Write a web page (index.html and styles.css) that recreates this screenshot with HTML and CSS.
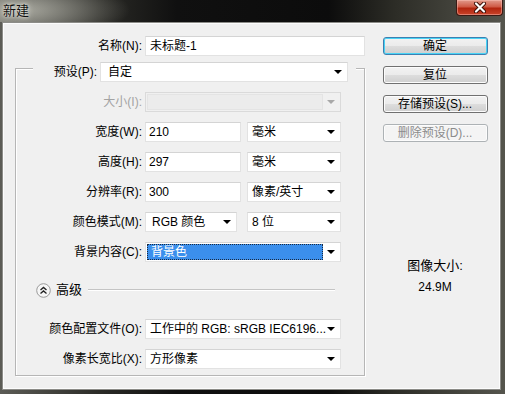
FILE: index.html
```html
<!doctype html>
<html lang="zh-CN">

<head>
  <meta charset="utf-8">
  <title>新建</title>
  <link rel="stylesheet" href="styles.css">
</head>

<body>
  <div class="window">
    <div class="titlebar">
      <span class="title">新建</span>
      <span class="close">
        <svg width="14" height="11" viewBox="0 0 14 11">
          <path d="M3 1.5 L11 9.5 M11 1.5 L3 9.5" stroke="#3a0c06" stroke-width="4" stroke-linecap="round" />
          <path d="M3 1.5 L11 9.5 M11 1.5 L3 9.5" stroke="#fff" stroke-width="2.2" stroke-linecap="round" />
        </svg>
      </span>
    </div>

    <div class="dialog">
      <div class="main">
        <div class="row name-row">
          <label>名称(<u>N</u>):</label>
          <div class="field name-field">未标题-1</div>
        </div>

        <div class="group">
          <div class="row preset-row">
            <label>预设(<u>P</u>):</label>
            <div class="field select preset-field">自定<i class="arrow"></i></div>
          </div>
          <div class="row">
            <label class="disabled">大小(<u>I</u>):</label>
            <div class="field select wide off"><span class="off-inner"></span><i class="arrow"></i></div>
          </div>
          <div class="row">
            <label>宽度(<u>W</u>):</label>
            <div class="field num">210</div>
            <div class="field select unit">毫米<i class="arrow"></i></div>
          </div>
          <div class="row">
            <label>高度(<u>H</u>):</label>
            <div class="field num">297</div>
            <div class="field select unit">毫米<i class="arrow"></i></div>
          </div>
          <div class="row">
            <label>分辨率(<u>R</u>):</label>
            <div class="field num">300</div>
            <div class="field select unit">像素/英寸<i class="arrow"></i></div>
          </div>
          <div class="row">
            <label>颜色模式(<u>M</u>):</label>
            <div class="field select mode">RGB 颜色<i class="arrow"></i></div>
            <div class="field select unit">8 位<i class="arrow"></i></div>
          </div>
          <div class="row">
            <label>背景内容(<u>C</u>):</label>
            <div class="field select wide focus"><span class="picked">背景色</span><i class="arrow"></i></div>
          </div>

          <div class="advanced">
            <span class="toggle">
              <svg width="15" height="15" viewBox="0 0 15 15">
                <circle cx="7.5" cy="7.5" r="6.8" fill="#f6f6f6" stroke="#9a9a9a" />
                <path d="M4.5 7 L7.5 4.5 L10.5 7 M4.5 10.5 L7.5 8 L10.5 10.5" fill="none" stroke="#222" stroke-width="1.4" />
              </svg>
            </span>
            <span class="adv-text">高级</span>
            <span class="adv-line"></span>
          </div>

          <div class="row profile-row">
            <label>颜色配置文件(<u>O</u>):</label>
            <div class="field select wide">工作中的 RGB: sRGB IEC6196...<i class="arrow"></i></div>
          </div>
          <div class="row">
            <label>像素长宽比(<u>X</u>):</label>
            <div class="field select wide">方形像素<i class="arrow"></i></div>
          </div>
        </div>
      </div>

      <div class="side">
        <button class="btn default">确定</button>
        <button class="btn">复位</button>
        <button class="btn">存储预设(<u>S</u>)...</button>
        <button class="btn" disabled>删除预设(<u>D</u>)...</button>
        <div class="size-info">
          <p class="size-label">图像大小:</p>
          <p class="size-value">24.9M</p>
        </div>
      </div>
    </div>
  </div>
</body>

</html>
```

FILE: styles.css
```css
* {
  box-sizing: border-box;
}

html,
body {
  margin: 0;
  padding: 0;
  background: #1c1c1a;
}

body,
button {
  font-family: "Liberation Sans", "Noto Sans CJK SC", sans-serif;
  font-size: 12px;
  color: #000;
}

u {
  text-decoration: none;
}

.window {
  width: 505px;
  height: 394px;
  display: flex;
  flex-direction: column;
  background: linear-gradient(90deg, #5c5c56 0, #2a2a26 20%, #101010 35%, #0c0c0c 65%, #2c2c26 78%, #55554d 100%);
}

.titlebar {
  height: 22px;
  display: flex;
  align-items: flex-start;
  justify-content: space-between;
  background: radial-gradient(ellipse 110px 30px at 20px 10px, rgba(190, 190, 180, 0.8), rgba(190, 190, 180, 0) 100%);
}

.title {
  margin: 3px 0 0 3px;
  line-height: 16px;
  font-size: 13px;
  color: #111;
  text-shadow: 0 0 6px #e8e8e0, 0 0 3px #e8e8e0;
}

.close {
  width: 47px;
  height: 16px;
  margin-right: 2px;
  display: flex;
  align-items: center;
  justify-content: center;
  border: 1px solid #3a1a14;
  border-top: 0;
  border-radius: 0 0 4px 4px;
  background: linear-gradient(#e19a8c 0, #cf5a46 45%, #b2250f 55%, #c9442a 100%);
  box-shadow: inset 0 0 0 1px rgba(255, 200, 190, 0.45);
}

.dialog {
  flex: 1;
  display: flex;
  margin: 1px 5px 5px 3px;
  background: #f0f0f0;
  border: 1px solid #fcfcfc;
  box-shadow: 0 0 0 1px #8c8c88;
}

.main {
  width: 369px;
  padding-left: 11px;
}

.row {
  display: flex;
  align-items: center;
  height: 20px;
}

.row label {
  width: 129px;
  padding-right: 3px;
  text-align: right;
  white-space: nowrap;
  line-height: 20px;
}

.row label.disabled {
  color: #a3a3a3;
}

.field {
  position: relative;
  height: 20px;
  line-height: 19px;
  padding-left: 4px;
  background: #fff;
  border: 1px solid #e2e2e2;
  border-top-color: #d4d4d4;
  white-space: nowrap;
  overflow: hidden;
}

.name-row {
  margin-top: 12px;
}

.name-row label {
  width: 130px;
}

.name-field {
  width: 220px;
}

.group {
  margin-top: 12px;
  width: 350px;
  height: 308px;
  display: flex;
  flex-direction: column;
  gap: 10px;
  border: 1px solid #b6b6b6;
  box-shadow: inset 1px 1px #fff, 1px 1px #fff;
}

.preset-row {
  margin: -7px 8px 0 17px;
  background: #f0f0f0;
}

.preset-row label {
  width: 67px;
}

.preset-field {
  width: 248px;
  padding-left: 7px;
}

.select {
  padding-right: 16px;
}

.arrow {
  position: absolute;
  right: 5px;
  top: 7px;
  width: 0;
  height: 0;
  border-left: 4px solid transparent;
  border-right: 4px solid transparent;
  border-top: 4px solid #000;
}

.wide {
  width: 196px;
}

.num {
  width: 96px;
  padding-left: 3px;
  margin-right: 6px;
}

.unit {
  width: 94px;
}

.mode {
  width: 92px;
  margin-right: 10px;
  padding-left: 6px;
}

.off {
  background: #f0f0f0;
  border-color: #dadada;
  padding: 1px;
}

.off-inner {
  display: block;
  width: 176px;
  height: 16px;
  background: #ececec;
  border: 1px solid #e4e4e4;
}

.off .arrow {
  border-top-color: #a8a8a8;
}

.focus {
  padding: 1px;
}

.picked {
  display: block;
  width: 176px;
  height: 16px;
  line-height: 15px;
  padding-left: 3px;
  color: #fff;
  background: #3b8fec;
  border: 1px dotted #1a2a40;
}

.advanced {
  display: flex;
  align-items: center;
  height: 16px;
  margin-top: 10px;
  padding-left: 20px;
}

.toggle {
  display: flex;
  width: 15px;
  height: 15px;
}

.adv-text {
  margin-left: 5px;
  font-size: 13px;
  line-height: 16px;
}

.adv-line {
  width: 247px;
  height: 2px;
  margin-left: 6px;
  border-top: 1px solid #c4c4c4;
  border-bottom: 1px solid #fff;
}

.profile-row {
  margin-top: 11px;
}

.side {
  flex: 1;
  display: flex;
  flex-direction: column;
  align-items: center;
  padding-top: 13px;
  padding-right: 2px;
}

.btn {
  width: 105px;
  height: 18px;
  margin-bottom: 11px;
  padding: 0;
  line-height: 15px;
  text-align: center;
  border: 1px solid #707070;
  border-radius: 3px;
  background: linear-gradient(#f2f2f2 0, #ebebeb 50%, #dddddd 51%, #cfcfcf 100%);
  box-shadow: inset 0 0 0 1px #fcfcfc;
}

.btn.default {
  border-color: #3c7fb1;
  box-shadow: inset 0 0 0 1px #48d3f5;
}

.btn:disabled {
  color: #8b8b8b;
  border-color: #adb2b5;
  background: #f4f4f4;
}

.size-info {
  margin-top: 105px;
  text-align: center;
}

.size-info p {
  margin: 0;
}

.size-label {
  font-size: 13px;
  line-height: 16px;
}

.size-value {
  margin-top: 6px !important;
  line-height: 14px;
}
```
